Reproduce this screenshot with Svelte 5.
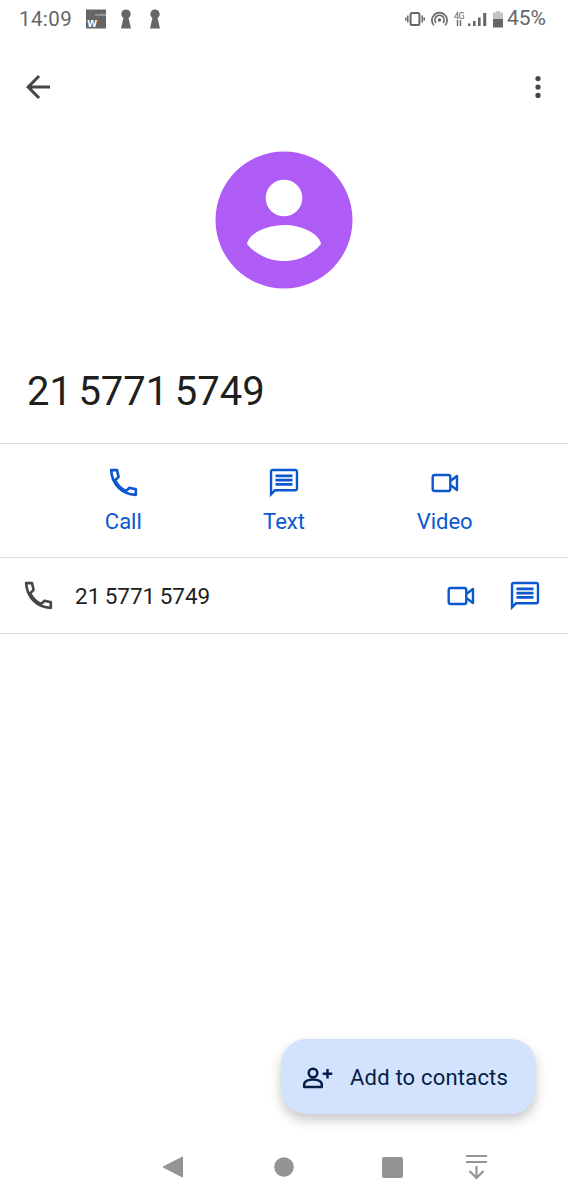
<script>
	const number = '21 5771 5749';
	const blue = '#0b57d0';
	const phone = 'M4 4h3.8c.4 1.6.6 3 1 4.3L6.6 10.6c1.6 3.2 3.8 5.4 7 7l2.3-2.2c1.3.4 2.7.6 4.1.9V20C11 19.6 4.4 13 4 4z';
	const message = 'M20 2H4c-1.1 0-2 .9-2 2v18l4-4h14c1.1 0 2-.9 2-2V4c0-1.1-.9-2-2-2zm.3 14.3H5.3L3.7 17.9V3.7h16.6zM6 12h12v2H6zm0-3h12v2H6zm0-3h12v2H6z';
</script>

{#snippet phoneIcon(color)}
	<svg width="37" height="37" viewBox="0 0 24 24" fill="none" stroke={color} stroke-width="1.7" stroke-linejoin="round"><path d={phone} /></svg>
{/snippet}

{#snippet messageIcon()}
	<svg width="34" height="34" viewBox="0 0 24 24" fill={blue} fill-rule="evenodd"><path d={message} /></svg>
{/snippet}

{#snippet videoIcon()}
	<svg width="36" height="36" viewBox="0 0 36 36" fill="none" stroke={blue} stroke-width="2.4" stroke-linejoin="round">
		<rect x="5.7" y="10" width="17.6" height="16" rx="2" />
		<path d="M24 15.5L30 11V25L24 20.5" />
	</svg>
{/snippet}

<div class="screen">
	<div class="status">
		<span class="time">14:09</span>
		<div class="notif">
			<svg width="20" height="20" viewBox="0 0 20 20">
				<rect width="20" height="19" y="0.5" fill="#666" />
				<text x="1.5" y="17.5" class="w">w</text>
				<text x="9" y="7" class="mob">mobile</text>
			</svg>
			<svg class="key" width="12" height="20" viewBox="0 0 12 20">
				<path d="M6 0.5a4.6 4.6 0 0 1 2.6 8.4L11 19.5H1L3.4 8.9A4.6 4.6 0 0 1 6 0.5z" fill="#666" />
			</svg>
			<svg class="key2" width="12" height="20" viewBox="0 0 12 20">
				<path d="M6 0.5a4.6 4.6 0 0 1 2.6 8.4L11 19.5H1L3.4 8.9A4.6 4.6 0 0 1 6 0.5z" fill="#666" />
			</svg>
		</div>
		<div class="sys">
			<svg width="20" height="14" viewBox="0 0 20 14">
				<rect x="5.6" y="1" width="8.8" height="12" rx="1.6" fill="none" stroke="#666" stroke-width="2" />
				<path d="M2.8 3.5v7M0.8 5.5v3M17.2 3.5v7M19.2 5.5v3" stroke="#666" stroke-width="1.5" fill="none" />
			</svg>
			<svg class="hot" width="17" height="17" viewBox="0 0 17 17">
				<circle cx="8.5" cy="9" r="1.8" fill="#666" />
				<path d="M5 12a4.6 4.6 0 1 1 7 0M2.8 14.3a7.6 7.6 0 1 1 11.4 0" fill="none" stroke="#666" stroke-width="1.7" />
			</svg>
			<span class="net">
				<span class="g">4G</span>
				<svg width="8" height="6" viewBox="0 0 8 6"><path d="M2.5 0v6M5.5 0v6" stroke="#666" stroke-width="1.4" /></svg>
			</span>
			<svg class="bars" width="20" height="14" viewBox="0 0 20 14">
				<rect x="0" y="11.5" width="2.4" height="2.5" fill="#666" />
				<rect x="5" y="9" width="2.6" height="5" fill="#666" />
				<rect x="10" y="5.5" width="2.6" height="8.5" fill="#666" />
				<rect x="15.2" y="1" width="3" height="13" fill="#666" />
			</svg>
			<svg class="batt" width="10" height="17" viewBox="0 0 10 17">
				<rect x="3" y="0" width="4" height="2" fill="#c4c4c4" />
				<rect x="0" y="1.5" width="10" height="6.5" fill="#c4c4c4" />
				<rect x="0" y="8" width="10" height="8.5" fill="#666" />
			</svg>
			<span class="pct">45%</span>
		</div>
	</div>

	<div class="topbar">
		<svg width="36" height="36" viewBox="0 0 24 24" fill="#444746"><path d="M20 11H7.83l5.59-5.59L12 4l-8 8 8 8 1.41-1.41L7.83 13H20v-2z" /></svg>
		<svg width="36" height="36" viewBox="0 0 24 24" fill="#444746"><circle cx="12" cy="6.4" r="1.75" /><circle cx="12" cy="12" r="1.75" /><circle cx="12" cy="17.6" r="1.75" /></svg>
	</div>

	<div class="avatar">
		<svg width="138" height="138" viewBox="0 0 138 138">
			<circle cx="69" cy="69" r="68.5" fill="#af5cf7" />
			<circle cx="69" cy="47" r="18.3" fill="#fff" />
			<path d="M32 93C34 82 52 74 69 74C86 74 104 82 106 93C98 103 84 110 69 110C54 110 40 103 32 93z" fill="#fff" />
		</svg>
	</div>

	<h1 class="name">{number}</h1>

	<div class="actions">
		<div class="action">
			<div class="ico">{@render phoneIcon(blue)}</div>
			<span>Call</span>
		</div>
		<div class="action">
			<div class="ico">{@render messageIcon()}</div>
			<span>Text</span>
		</div>
		<div class="action">
			<div class="ico">{@render videoIcon()}</div>
			<span>Video</span>
		</div>
	</div>

	<div class="row">
		{@render phoneIcon('#444746')}
		<span class="rownum">{number}</span>
		<div class="rowvid">{@render videoIcon()}</div>
		<div class="rowmsg">{@render messageIcon()}</div>
	</div>

	<div class="spacer"></div>

	<button class="fab">
		<svg width="32" height="24" viewBox="0 0 32 24" fill="none" stroke="#041e49" stroke-width="2.5">
			<circle cx="11" cy="8" r="4.3" />
			<path d="M2.2 22v-2.6c0-3 4-5 8.8-5s8.8 2 8.8 5V22z" stroke-linejoin="round" />
			<path d="M25.5 4v9.500M20.700 8.700h9.600" />
		</svg>
		<span>Add to contacts</span>
	</button>

	<div class="nav">
		<svg class="n1" width="21" height="22" viewBox="0 0 21 22"><path d="M20.5 1v20L1 11z" fill="#949494" stroke="#949494" stroke-linejoin="round" /></svg>
		<svg class="n2" width="20" height="20" viewBox="0 0 20 20"><circle cx="10" cy="10" r="9.8" fill="#949494" /></svg>
		<svg class="n3" width="21" height="21" viewBox="0 0 21 21"><rect width="21" height="21" rx="2" fill="#949494" /></svg>
		<svg class="n4" width="21" height="24" viewBox="0 0 21 24">
			<path d="M0 1h21M0 7h21" stroke="#949494" stroke-width="2.2" />
			<path d="M10.5 11v11.5M3.5 16l7 7 7-7" stroke="#949494" stroke-width="2.2" fill="none" />
		</svg>
	</div>
</div>

<style>
	:global(body) {
		margin: 0;
		background: #fff;
	}
	.screen {
		width: 568px;
		height: 1200px;
		display: flex;
		flex-direction: column;
		font-family: Roboto, sans-serif;
		color: #1f1f1f;
		overflow: hidden;
	}
	.status {
		height: 38px;
		padding: 0 19px;
		display: flex;
		align-items: center;
		color: #666;
	}
	.time {
		font-size: 20.5px;
		letter-spacing: 0.4px;
	}
	.notif {
		display: flex;
		align-items: center;
		margin-left: 14px;
	}
	.w {
		font-family: 'Liberation Sans', sans-serif;
		font-size: 12px;
		font-weight: 700;
		fill: #fff;
	}
	.mob {
		font-family: Roboto, sans-serif;
		font-size: 4px;
		fill: #ccc;
	}
	.key { margin-left: 14px; }
	.key2 { margin-left: 17px; }
	.sys {
		margin-left: auto;
		margin-right: 3px;
		display: flex;
		align-items: center;
	}
	.hot { margin-left: 6px; }
	.net {
		margin-left: 6px;
		display: flex;
		flex-direction: column;
		align-items: center;
		width: 10px;
	}
	.g {
		font-size: 9px;
		line-height: 8px;
		letter-spacing: -0.5px;
	}
	.bars { margin-left: 4px; }
	.batt { margin-left: 5px; }
	.pct {
		font-size: 21px;
		margin-left: 4px;
		margin-bottom: 2px;
	}
	.topbar {
		height: 98px;
		padding: 0 12px 0 20px;
		display: flex;
		align-items: center;
		justify-content: space-between;
	}
	.avatar {
		display: flex;
		justify-content: center;
		margin-top: 15px;
	}
	.name {
		margin: 0;
		padding: 79px 27px 27px;
		font-size: 40px;
		line-height: 48px;
		font-weight: 400;
		word-spacing: -3.5px;
		color: #1f1f1f;
		border-bottom: 1px solid #dcdcdc;
	}
	.actions {
		height: 113px;
		padding: 0 43px;
		display: grid;
		grid-template-columns: repeat(3, 1fr);
		border-bottom: 1px solid #dcdcdc;
	}
	.action {
		display: flex;
		flex-direction: column;
		align-items: center;
		color: #0b57d0;
		font-size: 22px;
		line-height: 24px;
		padding-top: 20px;
		gap: 9px;
	}
	.ico {
		height: 37px;
		display: flex;
		align-items: center;
	}
	.row {
		height: 75px;
		padding: 0 26px 0 20px;
		display: flex;
		align-items: center;
		border-bottom: 1px solid #dcdcdc;
	}
	.rownum {
		margin-left: 18px;
		font-size: 22.5px;
		word-spacing: -1.2px;
	}
	.rowvid, .rowmsg {
		display: flex;
		align-items: center;
	}
	.rowvid { margin-left: auto; }
	.rowmsg { margin-left: 29px; }
	.spacer { flex: 1; }
	.fab {
		align-self: flex-end;
		width: 255px;
		height: 75px;
		margin-right: 32px;
		margin-bottom: 28px;
		padding: 0 0 0 21px;
		display: flex;
		align-items: center;
		gap: 16px;
		border: none;
		border-radius: 25px;
		background: #d3e3fd;
		color: #041e49;
		font-family: Roboto, sans-serif;
		font-size: 22px;
		letter-spacing: 0.2px;
		box-shadow: 0 6px 12px rgba(0, 0, 0, 0.22);
	}
	.fab span { margin-top: 2px; }
	.nav {
		height: 58px;
		padding: 0 0 8px 162px;
		box-sizing: border-box;
		display: flex;
		align-items: center;
	}
	.n2 { margin-left: 91px; }
	.n3 { margin-left: 88px; }
	.n4 { margin-left: 63px; }
</style>
